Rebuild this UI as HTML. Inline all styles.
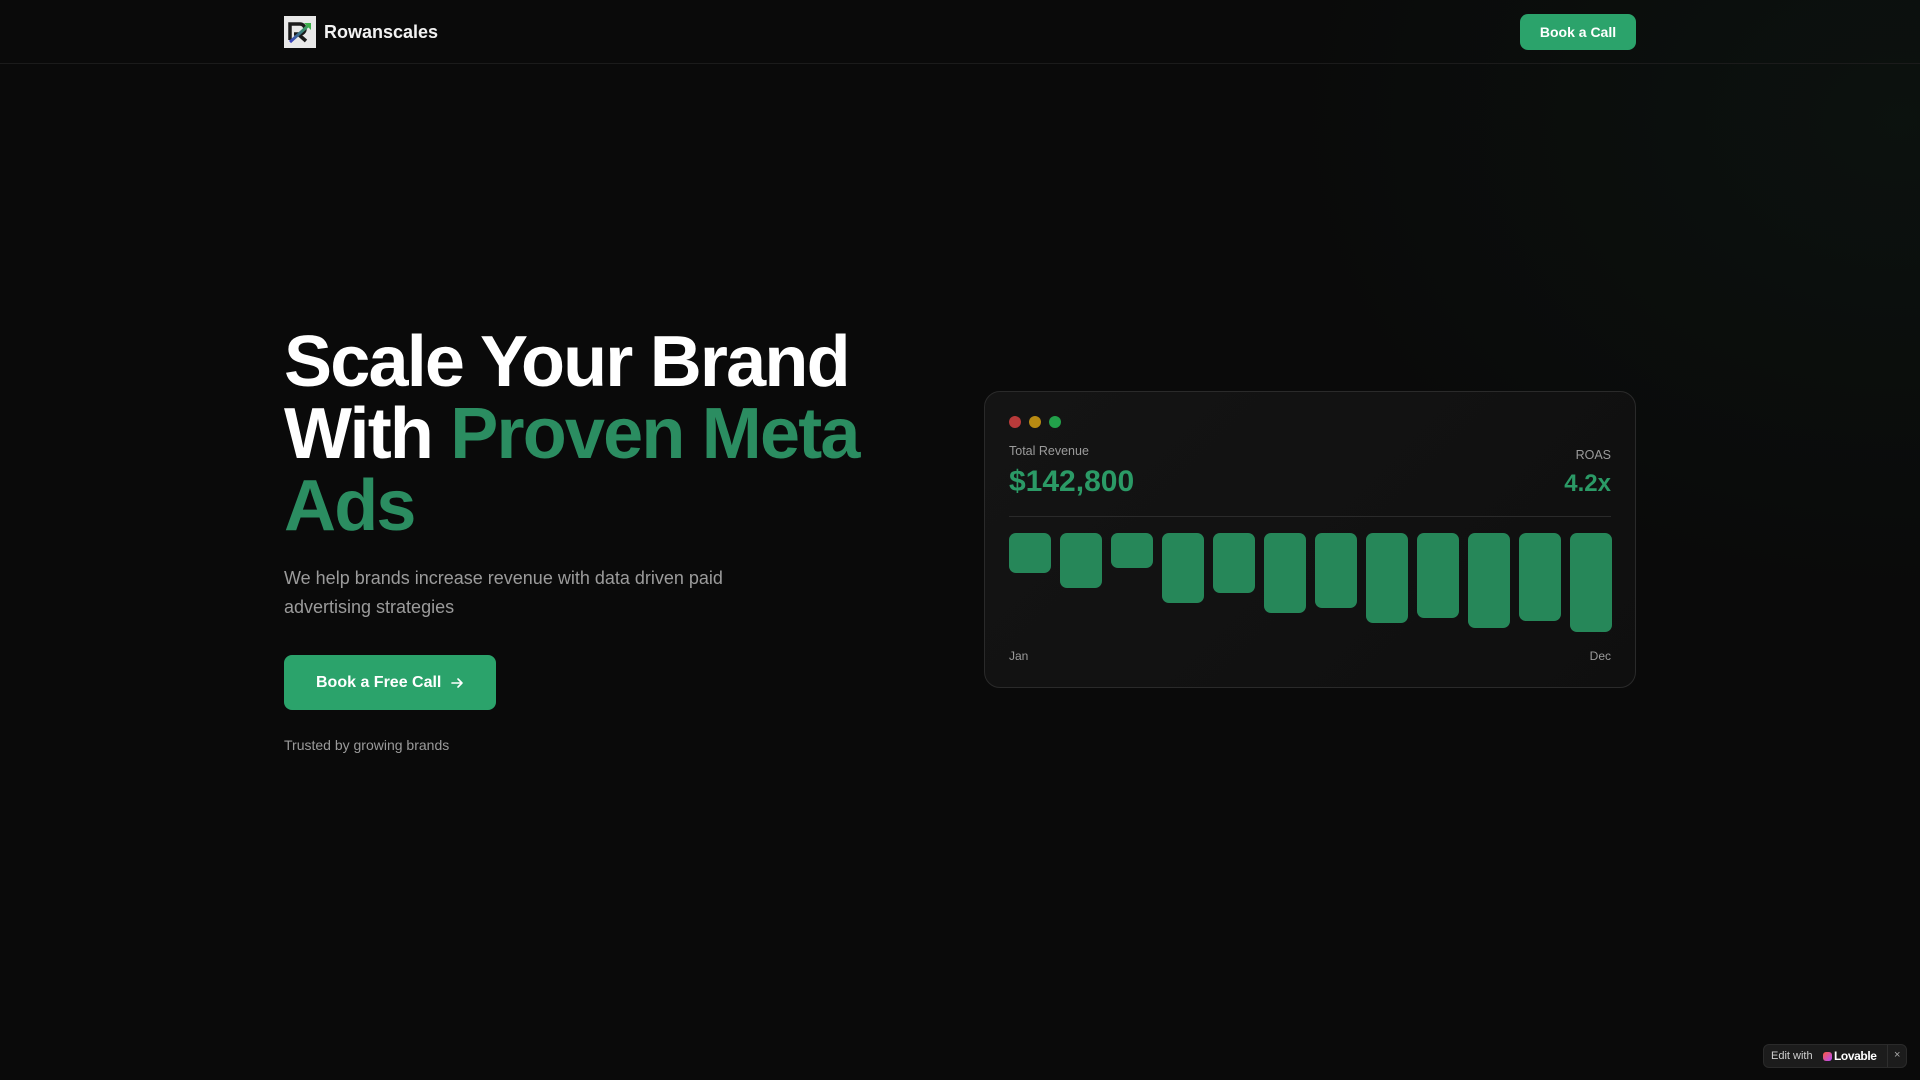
<!DOCTYPE html>
<html><head><meta charset="utf-8"><style>
*{margin:0;padding:0;box-sizing:border-box}
body{width:1920px;height:1080px;overflow:hidden;background:#0a0a0a;font-family:"Liberation Sans",sans-serif;color:#fff;position:relative}
.glow{position:absolute;inset:0;background:radial-gradient(ellipse 900px 700px at 1900px 120px,rgba(40,140,90,0.06),rgba(0,0,0,0) 70%)}
nav{position:absolute;left:0;top:0;width:1920px;height:64px;border-bottom:1px solid #1b1b1b}
.logo{position:absolute;left:284px;top:16px;width:32px;height:32px;background:#e8e8e8}
.brand{position:absolute;left:324px;top:22px;font-size:18px;font-weight:bold;color:#f2f2f2}
.nbtn{position:absolute;left:1520px;top:14px;width:116px;height:36px;border-radius:8px;background:#2ba36b;color:#fff;font-weight:bold;font-size:14px;text-align:center;line-height:36px}
h1{position:absolute;left:284px;top:326px;font-size:72px;line-height:72px;letter-spacing:-1.8px;font-weight:bold;color:#fff;width:640px}
h1 span{color:#2b8d61}
p.sub{position:absolute;left:284px;top:564px;width:470px;font-size:18px;line-height:29px;color:#9b9b9b}
.cta{position:absolute;left:284px;top:655px;width:212px;height:55px;border-radius:8px;background:#2ba36b;color:#fff;font-weight:bold;font-size:16px;line-height:55px;padding-left:32px}
.cta svg{position:absolute;left:166px;top:21px}
.trust{position:absolute;left:284px;top:737px;font-size:14px;color:#9b9b9b}
.card{position:absolute;left:984px;top:391px;width:652px;height:297px;border:1px solid #2a2a2a;border-radius:16px;background:linear-gradient(135deg,#141414,#0f0f0f)}
.dot{position:absolute;top:24px;width:12px;height:12px;border-radius:50%}
.lbl{position:absolute;font-size:12.5px;color:#9b9b9b}
.big{position:absolute;font-weight:bold;color:#2b9a66}
.div{position:absolute;left:24px;right:24px;top:124px;height:1px;background:#2a2a2a}
.bar{position:absolute;top:141px;width:42px;background:#268759;border-radius:7px}
.badge{position:absolute;left:1763px;top:1044px;width:144px;height:24px;border-radius:6px;background:#1c1c1c;border:1px solid #2a2a2a;font-size:11px;color:#cfcfcf}
</style></head><body>
<div class="glow"></div>
<nav>
<div class="logo"><svg width="32" height="32" viewBox="0 0 32 32"><path d="M6 24V8h10a5 5 0 0 1 0 10H10" fill="none" stroke="#1a1a1a" stroke-width="3.5"/><path d="M14 18l8 7" stroke="#1a1a1a" stroke-width="3.5"/><path d="M6 26L26 8" stroke="url(#g)" stroke-width="3"/><path d="M20 7h7v7z" fill="#3cb04a"/><defs><linearGradient id="g" x1="0" y1="1" x2="1" y2="0"><stop offset="0" stop-color="#3a3fc0"/><stop offset="1" stop-color="#3cb04a"/></linearGradient></defs></svg></div>
<div class="brand">Rowanscales</div>
<div class="nbtn">Book a Call</div>
</nav>
<h1>Scale Your Brand With <span>Proven Meta Ads</span></h1>
<p class="sub">We help brands increase revenue with data driven paid advertising strategies</p>
<div class="cta">Book a Free Call<svg width="14" height="14" viewBox="0 0 14 14" fill="none" stroke="#fff" stroke-width="1.6" stroke-linecap="round" stroke-linejoin="round"><path d="M2 7h10M8 3l4 4-4 4"/></svg></div>
<div class="trust">Trusted by growing brands</div>
<div class="card">
<div class="dot" style="left:24px;background:#b83a3a"></div>
<div class="dot" style="left:44px;background:#b88a12"></div>
<div class="dot" style="left:64px;background:#22a04a"></div>
<div class="lbl" style="left:24px;top:52px">Total Revenue</div>
<div class="big" style="left:24px;top:73px;font-size:30px">$142,800</div>
<div class="lbl" style="right:24px;top:56px">ROAS</div>
<div class="big" style="right:24px;top:78px;font-size:24px">4.2x</div>
<div class="div"></div>
<div class="bar" style="left:24px;height:40px"></div>
<div class="bar" style="left:75px;height:55px"></div>
<div class="bar" style="left:126px;height:35px"></div>
<div class="bar" style="left:177px;height:70px"></div>
<div class="bar" style="left:228px;height:60px"></div>
<div class="bar" style="left:279px;height:80px"></div>
<div class="bar" style="left:330px;height:75px"></div>
<div class="bar" style="left:381px;height:90px"></div>
<div class="bar" style="left:432px;height:85px"></div>
<div class="bar" style="left:483px;height:95px"></div>
<div class="bar" style="left:534px;height:88px"></div>
<div class="bar" style="left:585px;height:99px"></div>
<div class="lbl" style="left:24px;top:257px;font-size:12px">Jan</div>
<div class="lbl" style="right:24px;top:257px;font-size:12px">Dec</div>
</div>
<div class="badge"><span style="position:absolute;left:7px;top:5px">Edit with</span><span style="position:absolute;left:59px;top:7px;width:9px;height:9px;border-radius:3px;background:linear-gradient(135deg,#ff5a3c,#b24bff)"></span><span style="position:absolute;left:70px;top:4px;font-weight:bold;color:#fff;font-size:12px;letter-spacing:-0.4px">Lovable</span><span style="position:absolute;left:123px;top:0;width:1px;height:22px;background:#2e2e2e"></span><span style="position:absolute;left:130px;top:4px;color:#aaa">×</span></div>
</body></html>
